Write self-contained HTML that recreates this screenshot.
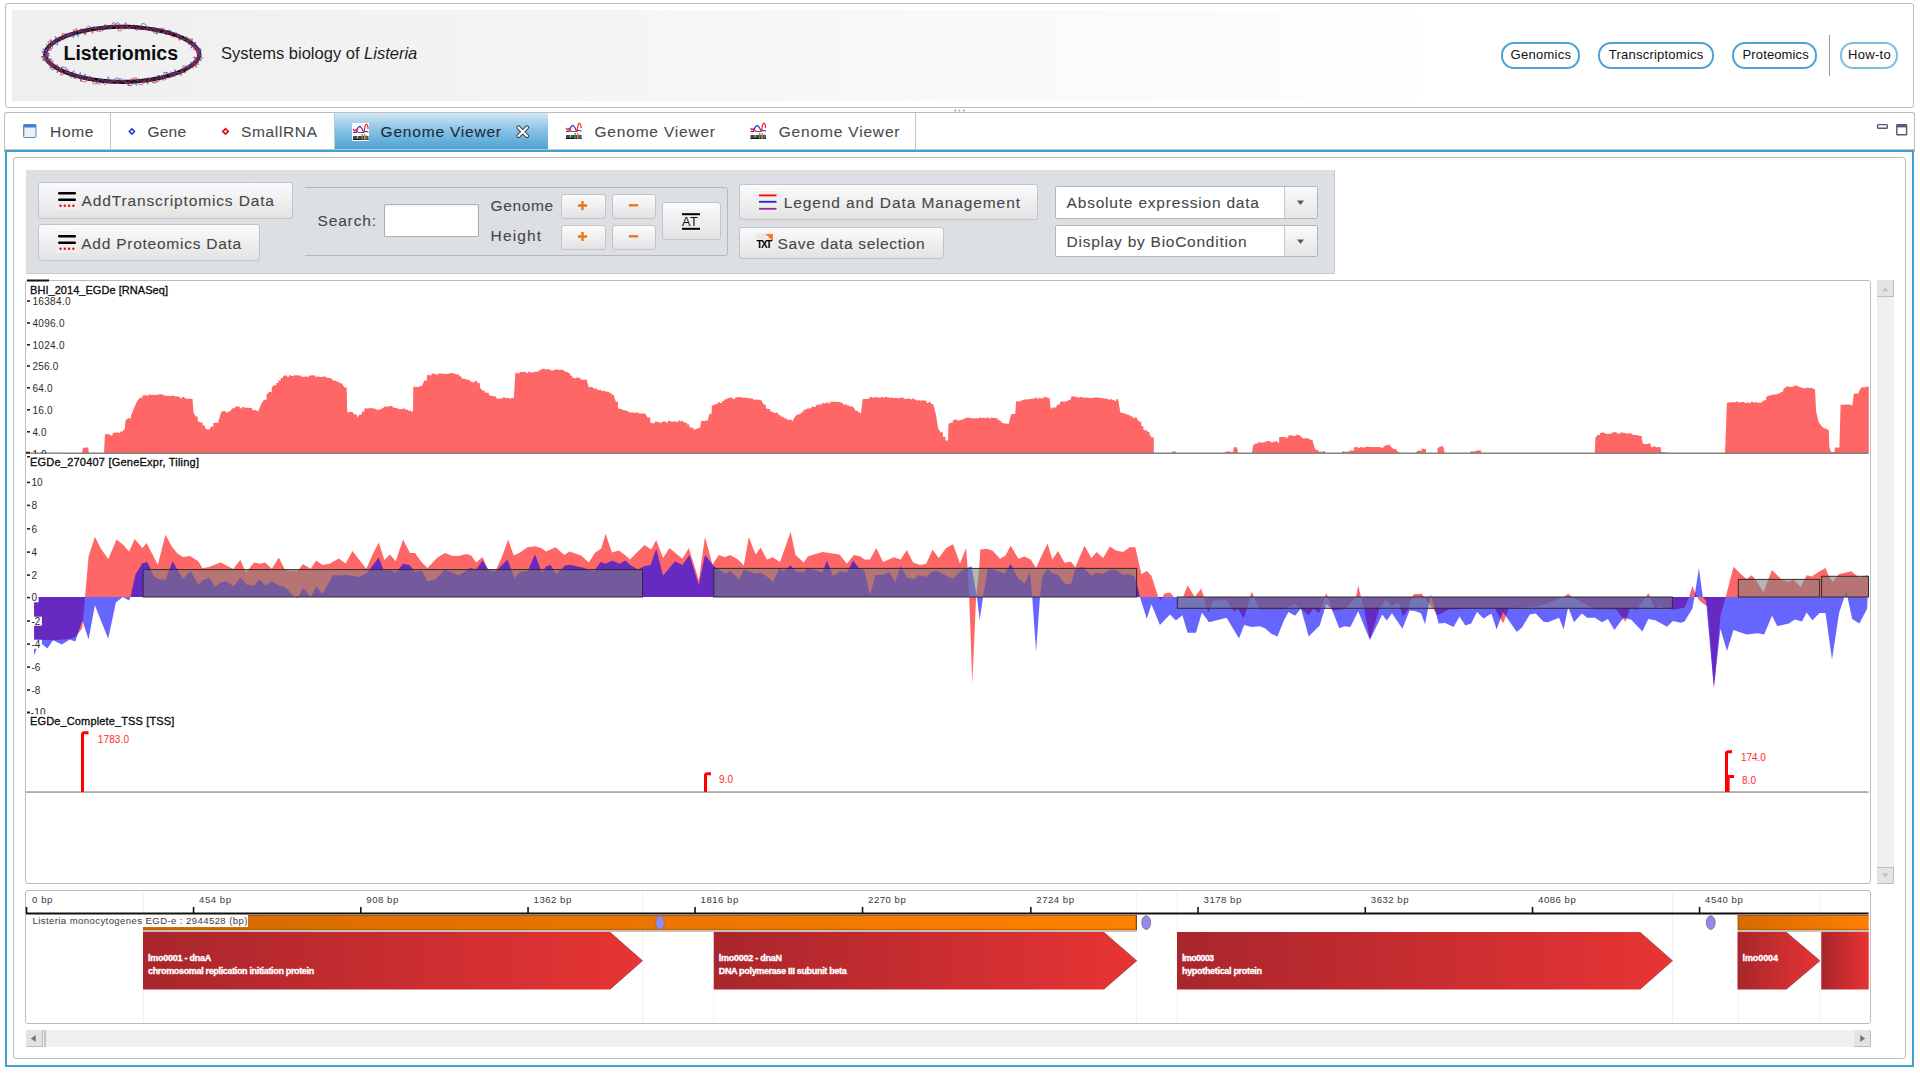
<!DOCTYPE html><html><head><meta charset="utf-8"><title>Listeriomics - Genome Viewer</title><style>
*{box-sizing:border-box;margin:0;padding:0}
html,body{width:1920px;height:1073px;overflow:hidden;background:#fff;font-family:"Liberation Sans",sans-serif}
.a{position:absolute}
.t{position:absolute;white-space:nowrap;line-height:normal}
.dv{-webkit-text-stroke:0.1px currentColor}
.btn{position:absolute;border:1px solid #c2c4c8;border-radius:3px;background:linear-gradient(#fbfbfb,#e3e3e3)}
.hb{position:absolute;border:2px solid #4ba3d5;border-radius:13px;background:#fff}
svg text{font-family:"Liberation Sans",sans-serif}
</style></head><body>
<div class="a" style="left:5px;top:3px;width:1909px;height:105px;border:1px solid #bdbdbd;border-radius:3px"></div>
<div class="a" style="left:12px;top:10px;width:1895px;height:91px;background:linear-gradient(to right,#efefef 0px,#f3f3f3 450px,#f8f8f8 850px,#fafafa 1040px,#fcfcfc 1250px,#fefefe 1340px,#ffffff 1430px)"></div>
<svg class="a" style="left:0;top:0" width="260" height="110"><polygon points="199.20,54.30 199.17,54.90 199.09,55.54 198.95,56.19 198.76,56.86 198.51,57.54 198.20,58.22 197.84,58.90 197.43,59.58 196.96,60.27 196.44,60.95 195.87,61.64 195.24,62.32 194.56,63.00 193.83,63.67 193.04,64.34 192.21,65.01 191.33,65.67 190.39,66.32 189.41,66.97 188.38,67.61 187.30,68.24 186.18,68.86 185.01,69.47 183.80,70.08 182.55,70.67 181.25,71.25 179.91,71.82 178.54,72.38 177.12,72.93 175.66,73.46 174.17,73.98 172.64,74.49 171.08,74.99 169.49,75.47 167.87,75.93 166.21,76.38 164.53,76.82 162.82,77.23 161.08,77.64 159.32,78.02 157.54,78.39 155.73,78.74 153.91,79.08 152.07,79.39 150.21,79.69 148.34,79.97 146.46,80.24 144.57,80.48 142.67,80.70 140.76,80.91 138.85,81.10 136.94,81.27 135.03,81.41 133.12,81.54 131.23,81.65 129.35,81.74 127.48,81.81 125.65,81.86 123.86,81.89 122.20,81.90 120.54,81.89 118.75,81.86 116.92,81.81 115.05,81.74 113.17,81.65 111.28,81.54 109.37,81.41 107.46,81.27 105.55,81.10 103.64,80.91 101.73,80.70 99.83,80.48 97.94,80.24 96.06,79.97 94.19,79.69 92.33,79.39 90.49,79.08 88.67,78.74 86.86,78.39 85.08,78.02 83.32,77.64 81.58,77.23 79.87,76.82 78.19,76.38 76.53,75.93 74.91,75.47 73.32,74.99 71.76,74.49 70.23,73.98 68.74,73.46 67.28,72.93 65.86,72.38 64.49,71.82 63.15,71.25 61.85,70.67 60.60,70.08 59.39,69.47 58.22,68.86 57.10,68.24 56.02,67.61 54.99,66.97 54.01,66.32 53.07,65.67 52.19,65.01 51.36,64.34 50.57,63.67 49.84,63.00 49.16,62.32 48.53,61.64 47.96,60.95 47.44,60.27 46.97,59.58 46.56,58.90 46.20,58.22 45.89,57.54 45.64,56.86 45.45,56.19 45.31,55.54 45.23,54.90 45.20,54.30 45.23,53.70 45.31,53.06 45.45,52.41 45.64,51.74 45.89,51.06 46.20,50.38 46.56,49.70 46.97,49.02 47.44,48.33 47.96,47.65 48.53,46.96 49.16,46.28 49.84,45.60 50.57,44.93 51.36,44.26 52.19,43.59 53.07,42.93 54.01,42.28 54.99,41.63 56.02,40.99 57.10,40.36 58.22,39.74 59.39,39.13 60.60,38.52 61.85,37.93 63.15,37.35 64.49,36.78 65.86,36.22 67.28,35.67 68.74,35.14 70.23,34.62 71.76,34.11 73.32,33.61 74.91,33.13 76.53,32.67 78.19,32.22 79.87,31.78 81.58,31.37 83.32,30.96 85.08,30.58 86.86,30.21 88.67,29.86 90.49,29.52 92.33,29.21 94.19,28.91 96.06,28.63 97.94,28.36 99.83,28.12 101.73,27.90 103.64,27.69 105.55,27.50 107.46,27.33 109.37,27.19 111.28,27.06 113.17,26.95 115.05,26.86 116.92,26.79 118.75,26.74 120.54,26.71 122.20,26.70 123.86,26.71 125.65,26.74 127.48,26.79 129.35,26.86 131.23,26.95 133.12,27.06 135.03,27.19 136.94,27.33 138.85,27.50 140.76,27.69 142.67,27.90 144.57,28.12 146.46,28.36 148.34,28.63 150.21,28.91 152.07,29.21 153.91,29.52 155.73,29.86 157.54,30.21 159.32,30.58 161.08,30.96 162.82,31.37 164.53,31.78 166.21,32.22 167.87,32.67 169.49,33.13 171.08,33.61 172.64,34.11 174.17,34.62 175.66,35.14 177.12,35.67 178.54,36.22 179.91,36.78 181.25,37.35 182.55,37.93 183.80,38.52 185.01,39.13 186.18,39.74 187.30,40.36 188.38,40.99 189.41,41.63 190.39,42.28 191.33,42.93 192.21,43.59 193.04,44.26 193.83,44.93 194.56,45.60 195.24,46.28 195.87,46.96 196.44,47.65 196.96,48.33 197.43,49.02 197.84,49.70 198.20,50.38 198.51,51.06 198.76,51.74 198.95,52.41 199.09,53.06 199.17,53.70 199.20,54.30" fill="none" stroke="#0a0a0a" stroke-width="4"/><polyline points="196.8,54.3 199.5,55.2 197.8,55.8 199.6,57.3 199.3,58.4 194.4,57.0 193.6,57.4 198.9,62.8 194.1,60.4 193.1,61.1 196.7,67.1 192.4,64.5 193.2,68.1 189.9,66.4 189.3,68.5 185.6,65.6 186.1,70.3 185.2,73.1 182.1,71.1 181.0,73.7 178.8,73.9 174.8,69.6 174.8,76.2 172.2,75.5 169.2,73.7 166.3,72.0 165.8,79.9 162.6,77.0 160.6,79.8 158.3,81.7 155.4,80.8 153.1,83.1 149.7,78.8 147.6,82.8 144.5,80.0 142.3,84.7 139.5,84.5 136.2,77.7 133.6,78.2 131.0,79.1 128.6,86.0 125.9,81.3 123.4,83.0 121.1,80.1 118.5,81.9 116.0,80.7 113.4,80.3 110.6,82.3 107.8,82.1 104.9,84.7 102.3,82.4 99.4,84.3 96.7,83.3 93.8,84.1 91.6,80.8 89.9,75.9 86.1,81.6 83.4,81.9 80.9,80.8 79.2,77.3 76.5,77.9 75.5,72.9 71.6,77.6 70.1,74.6 68.9,71.5 67.6,68.9 63.0,74.7 60.6,74.9 62.2,66.7 57.6,71.6 57.7,67.6 57.4,64.8 55.4,65.0 51.6,67.6 49.7,67.3 53.4,60.7 48.9,63.5 51.8,59.1 46.4,62.1 48.4,59.1 43.6,60.6 42.2,59.8 45.7,57.0 41.1,57.1 47.0,55.0 49.0,54.3 44.4,53.3 49.5,53.5 48.3,52.5 46.8,51.0 45.7,49.2 49.7,50.4 51.1,50.3 46.3,44.5 50.8,47.0 47.9,41.7 49.6,41.1 53.7,43.9 54.5,42.3 55.7,41.0 56.7,39.1 58.5,38.6 60.4,38.0 61.9,36.7 62.7,33.2 66.2,36.0 68.4,35.9 69.7,32.7 73.2,36.1 75.2,34.9 75.9,28.4 79.3,31.7 81.7,30.9 85.2,35.1 86.9,31.0 89.2,29.0 92.6,33.5 94.4,27.8 97.0,27.3 100.3,32.0 102.4,26.7 105.2,27.8 107.8,25.7 110.7,28.4 113.2,25.1 115.9,24.7 118.6,31.0 121.1,30.7 123.4,25.1 126.0,22.6 128.4,29.1 131.1,27.3 133.9,26.3 136.4,28.9 139.1,28.8 141.7,29.5 144.4,29.3 147.4,27.6 149.6,30.6 152.3,30.4 155.5,27.3 156.8,34.4 160.3,30.1 163.1,29.3 164.6,33.6 166.7,34.9 170.5,30.6 171.2,36.1 173.2,37.2 176.0,35.9 178.9,34.4 178.8,40.2 181.4,39.2 183.1,39.9 186.9,36.7 186.8,40.7 190.3,38.4 188.4,44.5 190.5,44.2 193.5,42.8 196.0,42.3 194.5,46.1 193.9,48.4 193.8,49.8 197.4,48.5 195.4,51.0 200.8,49.5 201.6,50.6 196.2,53.2 197.2,53.7 202.0,54.3" fill="none" stroke="#e81e1e" stroke-width="0.9" stroke-opacity="0.75"/><polyline points="200.3,54.3 201.3,55.4 201.6,56.7 202.5,58.3 200.3,58.9 201.1,60.8 193.7,57.5 196.3,60.7 198.6,64.5 195.7,63.8 196.1,66.5 190.4,62.0 191.2,65.4 188.8,64.6 188.8,67.8 187.4,68.9 183.5,65.3 182.7,67.8 181.2,69.1 181.6,75.2 179.1,74.7 175.1,70.4 174.9,76.5 170.9,71.6 170.0,76.4 166.5,72.8 163.9,72.3 163.4,80.5 159.6,75.3 157.1,75.9 155.9,83.1 153.1,82.6 149.6,77.9 147.8,84.2 144.6,80.8 142.1,82.4 138.9,78.4 136.8,85.3 133.9,83.2 131.3,85.9 128.6,85.3 125.8,80.0 123.3,80.6 121.1,78.9 118.6,78.7 116.1,77.9 113.4,79.9 110.5,82.4 108.3,76.8 105.1,82.7 102.7,79.3 100.0,78.8 96.8,83.0 94.5,79.6 92.2,77.7 89.3,78.7 86.4,80.2 85.1,73.9 80.8,81.4 80.4,72.5 76.4,78.2 73.8,78.4 73.8,70.6 69.5,76.5 68.6,72.1 65.9,73.2 66.0,67.6 64.1,67.2 61.9,67.5 57.0,72.9 58.6,66.0 54.6,69.4 52.2,69.8 50.7,68.8 52.7,63.6 51.5,62.8 49.5,63.0 46.9,63.5 50.7,58.7 45.3,61.2 44.3,60.3 43.1,59.3 49.6,55.7 41.5,57.0 48.9,54.7 46.6,54.3 44.3,53.3 41.8,51.7 47.1,52.1 42.6,49.0 46.2,49.5 48.6,49.6 49.2,48.8 50.9,48.7 52.3,48.5 52.7,47.2 50.7,42.6 50.4,39.4 56.0,44.6 57.9,44.6 55.1,36.4 58.8,39.1 61.0,39.3 63.4,39.8 63.9,36.1 65.1,33.4 68.4,35.7 70.5,35.3 73.7,37.7 73.7,29.6 78.1,36.6 79.4,32.0 81.1,28.4 85.0,34.0 86.3,28.2 88.6,25.8 91.7,28.1 94.1,26.3 97.6,32.0 99.9,28.7 102.9,30.9 104.9,24.4 108.1,29.1 110.6,27.5 113.0,22.5 115.8,23.7 118.4,22.5 121.1,27.1 123.4,26.8 125.9,24.7 128.5,27.0 131.0,28.8 133.7,28.0 136.2,30.5 139.1,28.6 142.4,23.4 145.1,24.0 147.4,27.3 149.9,28.9 152.3,30.7 154.4,33.4 157.2,32.2 160.7,28.3 163.4,28.1 164.7,33.1 168.1,30.1 170.4,30.8 172.4,32.2 174.6,33.2 177.0,33.1 177.8,37.2 180.9,35.2 181.2,39.5 183.7,38.6 186.6,37.2 188.0,38.8 187.7,42.7 192.3,38.7 192.2,41.9 193.1,43.3 190.8,48.1 195.1,45.5 194.0,48.3 197.7,46.8 196.9,48.9 200.3,48.3 199.5,50.1 201.2,50.7 197.6,52.8 200.4,53.3 201.3,54.3" fill="none" stroke="#3550c0" stroke-width="0.9" stroke-opacity="0.75"/><polyline points="199.0,54.3 199.4,54.9 200.9,55.7 198.8,56.0 198.9,56.7 199.0,57.4 197.1,57.3 198.1,58.6 198.2,59.5 198.4,60.5 195.4,59.4 195.7,60.5 194.5,60.5 196.2,63.3 195.2,63.6 192.6,62.1 194.6,65.8 193.7,66.4 192.1,66.0 191.1,66.4 189.1,65.4 187.9,65.4 188.1,67.9 186.1,66.7 185.4,67.8 184.4,68.5 182.9,68.2 182.6,70.5 181.3,70.9 180.8,73.1 179.0,72.3 177.9,73.3 176.3,73.2 175.2,74.4 173.5,74.0 171.9,73.7 171.4,77.2 169.9,77.6 168.1,77.4 166.4,77.3 164.5,76.0 162.8,76.0 161.3,76.6 159.5,76.1 158.5,79.4 156.5,78.2 155.2,80.4 153.1,78.7 151.8,81.5 150.0,81.3 147.7,77.8 146.1,79.0 144.8,82.3 142.8,80.6 141.3,83.0 139.2,80.6 137.4,79.3 135.8,81.9 134.1,82.7 132.2,80.6 130.4,79.9 128.7,81.0 127.1,83.9 125.4,83.0 123.7,80.2 122.2,80.8 120.7,80.1 119.1,79.9 117.3,83.1 115.7,80.3 113.9,81.9 112.2,81.4 110.5,80.1 108.6,82.4 107.0,79.6 105.0,81.7 103.5,79.2 101.6,80.3 100.0,79.2 98.2,79.3 96.1,82.1 94.4,81.1 93.0,78.6 90.9,80.9 89.7,77.6 87.9,78.1 85.9,79.8 84.4,78.5 83.3,75.8 80.8,79.3 80.1,75.6 78.5,75.4 76.3,77.1 75.4,74.8 73.9,74.2 72.8,72.9 71.4,72.5 69.3,74.0 68.5,72.2 66.6,73.1 65.6,71.7 64.3,71.5 62.1,73.0 61.8,70.6 60.5,70.4 58.7,71.0 59.1,67.7 58.1,67.1 55.4,69.3 54.6,68.4 55.1,65.7 54.4,64.9 52.1,66.3 50.7,66.3 52.0,63.2 49.1,65.0 48.6,64.2 48.8,62.6 48.8,61.5 49.4,60.0 49.2,59.2 45.4,60.9 47.7,58.6 45.6,58.9 47.0,57.5 44.5,57.8 45.2,56.8 46.3,55.8 46.7,55.2 44.3,54.9 47.1,54.3 46.4,53.9 45.0,53.1 43.9,52.2 45.1,51.8 46.7,51.7 44.4,49.9 47.5,50.7 48.5,50.5 48.0,49.4 47.7,48.3 49.5,48.8 49.6,47.9 49.6,46.7 49.6,45.4 51.5,46.2 51.6,44.9 50.9,42.4 51.5,41.5 53.2,42.0 54.0,41.3 55.2,41.1 57.2,42.2 58.4,42.0 59.4,41.5 58.7,37.5 60.2,37.7 60.9,36.1 63.8,39.4 63.9,36.4 65.5,36.5 66.4,34.9 68.3,36.1 68.7,32.8 71.4,36.2 72.2,33.8 73.4,32.5 74.7,31.4 76.4,31.6 78.0,31.4 79.4,30.6 80.9,29.7 83.1,31.7 84.4,29.9 85.8,28.6 87.5,28.4 89.6,30.1 91.0,28.1 92.6,27.5 94.6,28.5 96.3,28.0 98.2,28.9 99.8,27.8 101.5,27.4 103.5,29.6 105.1,26.9 106.7,25.2 108.5,25.6 110.3,26.1 112.2,27.5 113.8,25.9 115.6,26.5 117.4,27.0 119.0,25.2 120.7,28.5 122.2,25.6 123.7,28.8 125.4,26.3 127.1,26.9 128.7,28.0 130.5,26.0 132.2,27.0 134.0,26.6 135.9,25.4 137.4,28.5 139.1,29.7 141.0,28.6 142.9,27.1 144.4,29.4 146.1,29.8 148.3,26.8 149.9,28.1 151.5,29.4 153.5,27.7 154.8,30.4 156.7,29.3 158.0,31.6 159.8,31.0 161.8,29.7 163.5,29.7 165.1,30.2 166.1,32.7 167.8,32.3 169.0,33.8 170.3,35.0 172.2,34.0 174.1,33.0 175.5,33.4 176.7,34.5 178.4,34.0 178.6,37.3 179.7,38.3 181.4,37.6 182.2,38.9 183.3,39.7 184.8,39.4 186.3,39.2 187.0,40.2 187.6,41.5 189.8,40.1 191.1,40.2 190.7,42.8 190.6,44.7 191.2,45.4 194.3,43.2 192.6,46.5 195.2,45.0 195.5,46.1 195.2,47.5 197.4,46.7 195.1,49.4 196.0,49.7 197.5,49.5 196.2,51.0 199.7,50.1 197.5,51.7 197.3,52.4 197.0,53.0 199.7,53.1 198.9,53.8 199.8,54.3" fill="none" stroke="#e81e1e" stroke-width="0.8" stroke-opacity="0.7"/><polyline points="198.1,54.3 200.0,54.9 199.9,55.6 200.5,56.4 197.5,56.2 197.5,56.9 196.9,57.3 197.0,58.0 198.6,59.7 195.9,58.9 197.0,60.5 195.4,60.3 195.1,61.1 195.0,62.1 195.6,64.0 194.3,63.9 191.9,62.5 191.9,64.0 190.7,64.2 191.8,67.4 190.7,67.8 189.7,68.4 188.8,69.0 187.6,69.3 186.9,70.7 185.5,70.7 183.3,69.1 183.3,72.0 181.4,71.1 180.7,72.7 179.1,72.5 177.6,72.4 176.1,72.7 174.9,73.4 173.3,73.4 171.7,73.0 171.1,76.4 169.6,76.8 168.3,78.0 166.4,77.2 164.7,77.0 163.3,78.2 161.1,76.0 160.0,78.7 158.2,78.0 156.3,77.2 154.7,77.6 153.2,79.3 151.3,78.4 149.8,79.6 148.1,80.5 146.3,79.8 144.4,78.9 142.8,80.6 140.9,79.7 139.2,79.9 137.4,79.9 135.7,80.8 133.9,79.6 132.3,82.3 130.6,83.7 128.8,81.3 127.1,82.8 125.4,83.8 123.7,79.9 122.2,80.3 120.7,83.2 119.0,83.4 117.3,82.4 115.7,80.3 113.9,81.3 112.1,83.2 110.3,83.2 108.5,82.7 107.0,79.9 105.0,82.6 103.4,80.3 101.5,81.6 100.0,78.9 97.8,82.3 96.3,80.5 94.5,80.7 93.1,78.2 91.1,79.7 89.4,79.2 87.8,79.0 86.3,77.6 84.3,78.9 83.1,76.9 81.5,76.3 80.1,75.4 78.0,77.2 77.1,74.3 75.5,74.4 74.2,73.3 72.0,75.2 70.7,74.4 69.4,73.9 68.8,71.3 66.8,72.5 65.7,71.6 64.9,70.0 63.8,69.2 60.8,72.6 61.3,68.6 59.9,68.7 58.9,68.1 57.1,68.8 57.3,66.2 55.5,67.1 54.8,66.1 52.7,67.2 54.0,63.7 52.4,64.2 51.2,64.2 49.1,65.1 49.7,63.0 49.2,62.2 48.0,62.2 48.7,60.5 49.2,59.2 47.1,59.8 45.2,60.1 45.4,59.0 47.0,57.5 45.0,57.6 44.1,57.1 46.4,55.8 44.9,55.5 45.9,54.8 46.3,54.3 46.2,53.8 46.6,53.4 46.1,52.7 47.5,52.5 46.2,51.5 47.7,51.4 45.4,49.5 46.3,49.2 48.9,50.0 46.6,47.5 49.1,48.4 48.6,47.0 49.0,46.1 50.3,46.2 51.1,45.7 51.4,44.6 52.9,45.1 51.8,41.9 54.5,44.0 53.7,40.8 56.0,42.4 56.8,41.5 57.6,40.6 59.4,41.5 60.2,40.5 60.9,39.1 61.9,38.2 62.3,35.9 63.3,34.9 66.2,38.3 66.7,35.7 68.6,36.9 69.0,33.6 71.1,35.2 71.7,32.3 73.6,33.3 75.6,34.6 77.2,34.7 78.5,33.3 79.3,30.2 81.7,32.9 82.9,31.1 84.7,31.2 86.3,31.0 87.6,28.7 89.7,30.9 91.0,28.5 92.8,28.4 94.3,26.9 96.3,28.5 97.8,26.5 99.9,28.4 101.5,27.6 103.3,27.2 105.0,26.1 106.7,25.6 108.8,28.9 110.5,28.7 112.1,26.9 113.8,25.5 115.6,26.7 117.4,27.7 119.0,24.7 120.7,27.6 122.2,28.5 123.7,28.7 125.3,28.8 127.1,25.8 128.7,28.6 130.5,26.0 132.3,25.4 134.2,24.9 135.9,25.9 137.5,27.7 139.3,27.0 141.2,26.3 142.9,27.0 144.5,29.0 146.5,27.2 147.8,30.3 149.7,29.7 151.9,27.0 153.2,29.5 154.7,30.7 156.8,28.8 158.2,30.6 159.4,32.8 161.0,33.1 162.8,32.5 164.5,32.5 166.7,30.4 167.4,33.7 169.7,31.6 171.2,32.0 172.1,34.3 174.3,32.4 175.4,33.8 176.3,35.4 177.3,36.9 178.9,36.5 180.9,35.3 181.5,37.3 182.1,39.2 183.6,39.0 184.9,39.2 185.4,40.8 187.2,39.9 187.0,42.6 189.8,40.2 189.2,43.2 189.8,44.0 191.9,42.9 191.9,44.5 194.3,43.1 193.9,45.0 194.7,45.6 196.3,45.3 194.9,47.7 197.2,46.9 197.4,47.8 197.0,49.0 199.4,48.4 196.2,51.0 199.8,50.0 197.1,51.9 200.3,51.5 197.5,52.9 197.2,53.5 199.2,53.8 201.1,54.3" fill="none" stroke="#3550c0" stroke-width="0.8" stroke-opacity="0.7"/></svg>
<div class="t" style="left:63.50px;top:41.65px;font-size:19.5px;letter-spacing:-0.034px;font-weight:bold;font-style:normal;color:#0d0d0d;">Listeriomics</div>
<div class="t" style="left:221.00px;top:44.32px;font-size:16.5px;letter-spacing:0.000px;font-weight:normal;font-style:normal;color:#1e1e1e;">Systems biology of <i>Listeria</i></div>
<div class="hb" style="left:1501px;top:42px;width:79px;height:27px"></div>
<div class="t" style="left:1510.60px;top:46.84px;font-size:13px;letter-spacing:0.270px;font-weight:normal;font-style:normal;color:#111;">Genomics</div>
<div class="hb" style="left:1598px;top:42px;width:116px;height:27px"></div>
<div class="t" style="left:1608.75px;top:46.84px;font-size:13px;letter-spacing:0.231px;font-weight:normal;font-style:normal;color:#111;">Transcriptomics</div>
<div class="hb" style="left:1732px;top:42px;width:85px;height:27px"></div>
<div class="t" style="left:1742.50px;top:46.84px;font-size:13px;letter-spacing:0.136px;font-weight:normal;font-style:normal;color:#111;">Proteomics</div>
<div class="hb" style="left:1840px;top:42px;width:58px;height:27px;border-color:#7fbde3"></div>
<div class="t" style="left:1848.00px;top:46.84px;font-size:13px;letter-spacing:0.313px;font-weight:normal;font-style:normal;color:#111;">How-to</div>
<div class="a" style="left:1829px;top:35px;width:1px;height:41px;background:#9a9a9a"></div>
<svg class="a" style="left:950px;top:106px" width="20" height="8"><circle cx="5.2" cy="4.4" r="1" fill="#999"/><circle cx="9.4" cy="4.4" r="1" fill="#aaa"/><circle cx="13.9" cy="4.4" r="1" fill="#999"/></svg>
<div class="a" style="left:4px;top:112px;width:1911px;height:40px;border:1px solid #bdbdbd;border-bottom:none;border-radius:3px 3px 0 0"></div>
<div class="a" style="left:110px;top:113px;width:1px;height:37px;background:#c4c4c4"></div>
<div class="a" style="left:915px;top:113px;width:1px;height:37px;background:#c4c4c4"></div>
<div class="a" style="left:5px;top:149px;width:1909px;height:1px;background:#c6c6c6"></div>
<div class="a" style="left:334px;top:113px;width:214px;height:36px;background:linear-gradient(#d2e8f5,#8cc4e6 45%,#4ca3d3);border-left:1px solid #b9c9d3"></div>
<div class="t dv" style="left:50.00px;top:122.97px;font-size:15.5px;letter-spacing:0.715px;font-weight:normal;font-style:normal;color:#4a4a4a;">Home</div>
<div class="t dv" style="left:147.50px;top:122.97px;font-size:15.5px;letter-spacing:0.196px;font-weight:normal;font-style:normal;color:#4a4a4a;">Gene</div>
<div class="t dv" style="left:241.00px;top:122.97px;font-size:15.5px;letter-spacing:0.645px;font-weight:normal;font-style:normal;color:#4a4a4a;">SmallRNA</div>
<div class="t dv" style="left:380.60px;top:122.97px;font-size:15.5px;letter-spacing:0.795px;font-weight:normal;font-style:normal;color:#1b2a35;">Genome Viewer</div>
<div class="t dv" style="left:594.50px;top:122.97px;font-size:15.5px;letter-spacing:0.804px;font-weight:normal;font-style:normal;color:#4a4a4a;">Genome Viewer</div>
<div class="t dv" style="left:778.70px;top:122.97px;font-size:15.5px;letter-spacing:0.829px;font-weight:normal;font-style:normal;color:#4a4a4a;">Genome Viewer</div>
<svg class="a" style="left:0;top:110px" width="960" height="40"><rect x="23.5" y="14.5" width="12.5" height="13" rx="1" fill="#e6f1fb" stroke="#6a86b4" stroke-width="1"/><rect x="23.5" y="14.5" width="12.5" height="3" fill="#3d7fd6"/><rect x="23.8" y="17.5" width="1" height="10" fill="#c9a84a" opacity="0.6"/><path d="M131.9,18.9 L134.5,21.5 L131.9,24.1 L129.3,21.5 Z" fill="#fff" stroke="#2a32c8" stroke-width="1.5"/><path d="M225.5,18.7 L228.2,21.4 L225.5,24.1 L222.8,21.4 Z" fill="#fff" stroke="#e01010" stroke-width="1.7"/><rect x="352.0" y="13.0" width="17" height="18" fill="#fff"/><g transform="translate(353.0,14.0)"><rect x="0" y="12" width="15.5" height="3.8" fill="#4a4a4a"/><rect x="0" y="15" width="15.5" height="1" fill="#111"/><rect x="4" y="12" width="1" height="2.5" fill="#bbb"/><rect x="8.5" y="10" width="1.3" height="6" fill="#22aa44"/><rect x="11" y="10" width="1.5" height="6" fill="#ee7744"/><rect x="13.3" y="11.5" width="1" height="4.5" fill="#557799"/><path d="M0,8.5 H3 Q6.5,-2.5 10,7 L15.5,8" fill="none" stroke="#2233dd" stroke-width="1.2"/><path d="M0,5 L1.5,6.8 L3,5.5 L5.2,8.5 H11 Q12,-0.5 13.5,0.3 Q15.2,1 15,5" fill="none" stroke="#ee2222" stroke-width="1.2"/></g><g transform="translate(566.0,13.0)"><rect x="0" y="12" width="15.5" height="3.8" fill="#4a4a4a"/><rect x="0" y="15" width="15.5" height="1" fill="#111"/><rect x="4" y="12" width="1" height="2.5" fill="#bbb"/><rect x="8.5" y="10" width="1.3" height="6" fill="#22aa44"/><rect x="11" y="10" width="1.5" height="6" fill="#ee7744"/><rect x="13.3" y="11.5" width="1" height="4.5" fill="#557799"/><path d="M0,8.5 H3 Q6.5,-2.5 10,7 L15.5,8" fill="none" stroke="#2233dd" stroke-width="1.2"/><path d="M0,5 L1.5,6.8 L3,5.5 L5.2,8.5 H11 Q12,-0.5 13.5,0.3 Q15.2,1 15,5" fill="none" stroke="#ee2222" stroke-width="1.2"/></g><g transform="translate(750.5,13.0)"><rect x="0" y="12" width="15.5" height="3.8" fill="#4a4a4a"/><rect x="0" y="15" width="15.5" height="1" fill="#111"/><rect x="4" y="12" width="1" height="2.5" fill="#bbb"/><rect x="8.5" y="10" width="1.3" height="6" fill="#22aa44"/><rect x="11" y="10" width="1.5" height="6" fill="#ee7744"/><rect x="13.3" y="11.5" width="1" height="4.5" fill="#557799"/><path d="M0,8.5 H3 Q6.5,-2.5 10,7 L15.5,8" fill="none" stroke="#2233dd" stroke-width="1.2"/><path d="M0,5 L1.5,6.8 L3,5.5 L5.2,8.5 H11 Q12,-0.5 13.5,0.3 Q15.2,1 15,5" fill="none" stroke="#ee2222" stroke-width="1.2"/></g><path d="M518.5,17.5 L527,26 M527,17.5 L518.5,26" stroke="#33414d" stroke-width="4.2" stroke-linecap="round"/><path d="M518.5,17.5 L527,26 M527,17.5 L518.5,26" stroke="#fff" stroke-width="2.2" stroke-linecap="round"/></svg>
<svg class="a" style="left:1870px;top:118px" width="45" height="22"><rect x="7.6" y="6.6" width="9.7" height="3.6" rx="0.8" fill="#fff" stroke="#4d5a7a" stroke-width="1.4"/><rect x="26.8" y="6.8" width="9.8" height="10" rx="0.6" fill="#fff" stroke="#4d5a7a" stroke-width="1.4"/><rect x="26.8" y="6.8" width="9.8" height="2.6" fill="#4d5a7a"/></svg>
<div class="a" style="left:5px;top:150px;width:1909px;height:917px;border:2px solid #43a0d4"></div>
<div class="a" style="left:13px;top:157px;width:1893px;height:902px;border:1px solid #bcbcbc;border-radius:3px"></div>
<div class="a" style="left:26px;top:170px;width:1309px;height:104px;background:#dcdfe4;border-right:1px solid #c6c8cc;border-bottom:1px solid #c6c8cc;border-radius:0 0 2px 0"></div>
<div class="btn" style="left:38px;top:182px;width:255px;height:37px"></div>
<div class="btn" style="left:38px;top:224px;width:222px;height:37px"></div>
<div class="t dv" style="left:81.50px;top:191.67px;font-size:15.5px;letter-spacing:0.866px;font-weight:normal;font-style:normal;color:#474747;">AddTranscriptomics Data</div>
<div class="t dv" style="left:81.25px;top:234.72px;font-size:15.5px;letter-spacing:0.751px;font-weight:normal;font-style:normal;color:#474747;">Add Proteomics Data</div>
<div class="btn" style="left:384px;top:204px;width:95px;height:33px;background:#fff;border-color:#aeb0b3;border-radius:1px;box-shadow:inset 0 1px 2px rgba(0,0,0,0.08)"></div>
<div class="t dv" style="left:317.50px;top:211.97px;font-size:15.5px;letter-spacing:0.848px;font-weight:normal;font-style:normal;color:#474747;">Search:</div>
<div class="t dv" style="left:490.60px;top:196.87px;font-size:15.5px;letter-spacing:0.591px;font-weight:normal;font-style:normal;color:#474747;">Genome</div>
<div class="t dv" style="left:490.60px;top:226.97px;font-size:15.5px;letter-spacing:1.118px;font-weight:normal;font-style:normal;color:#474747;">Height</div>
<div class="btn" style="left:561px;top:194px;width:45px;height:25px"></div>
<div class="btn" style="left:612px;top:194px;width:44px;height:25px"></div>
<div class="btn" style="left:561px;top:225px;width:45px;height:25px"></div>
<div class="btn" style="left:612px;top:225px;width:44px;height:25px"></div>
<div class="btn" style="left:662px;top:202px;width:59px;height:38px"></div>
<div class="btn" style="left:739px;top:184px;width:299px;height:36px"></div>
<div class="btn" style="left:739px;top:227px;width:205px;height:32px"></div>
<div class="t dv" style="left:783.70px;top:193.97px;font-size:15.5px;letter-spacing:0.903px;font-weight:normal;font-style:normal;color:#474747;">Legend and Data Management</div>
<div class="t dv" style="left:777.50px;top:234.77px;font-size:15.5px;letter-spacing:0.662px;font-weight:normal;font-style:normal;color:#474747;">Save data selection</div>
<div class="a" style="left:1055px;top:186px;width:263px;height:33px;border:1px solid #b3b5b8;border-radius:2px;background:#fff"></div>
<div class="a" style="left:1284px;top:187px;width:33px;height:31px;border-left:1px solid #c9c9c9;background:linear-gradient(#fafafa,#e6e6e6)"></div>
<div class="t dv" style="left:1066.60px;top:193.97px;font-size:15.5px;letter-spacing:0.797px;font-weight:normal;font-style:normal;color:#474747;">Absolute expression data</div>
<div class="a" style="left:1055px;top:225px;width:263px;height:32px;border:1px solid #b3b5b8;border-radius:2px;background:#fff"></div>
<div class="a" style="left:1284px;top:226px;width:33px;height:30px;border-left:1px solid #c9c9c9;background:linear-gradient(#fafafa,#e6e6e6)"></div>
<div class="t dv" style="left:1066.60px;top:232.97px;font-size:15.5px;letter-spacing:0.741px;font-weight:normal;font-style:normal;color:#474747;">Display by BioCondition</div>
<svg class="a" style="left:0;top:0" width="1340" height="280"><rect x="55" y="188" width="23" height="22" fill="#f1f1f1" opacity="0.7"/><rect x="58" y="192" width="18" height="2.4" rx="1.2" fill="#000"/><rect x="58" y="198.6" width="18" height="2.4" rx="1.2" fill="#000"/><circle cx="60.5" cy="205.7" r="1.2" fill="#f00"/><circle cx="64.8" cy="205.7" r="1.2" fill="#f00"/><circle cx="69.1" cy="205.7" r="1.2" fill="#f00"/><circle cx="73.4" cy="205.7" r="1.2" fill="#f00"/><rect x="55" y="231" width="23" height="22" fill="#f1f1f1" opacity="0.7"/><rect x="58" y="235" width="18" height="2.4" rx="1.2" fill="#000"/><rect x="58" y="241.6" width="18" height="2.4" rx="1.2" fill="#000"/><circle cx="60.5" cy="248.7" r="1.2" fill="#f00"/><circle cx="64.8" cy="248.7" r="1.2" fill="#f00"/><circle cx="69.1" cy="248.7" r="1.2" fill="#f00"/><circle cx="73.4" cy="248.7" r="1.2" fill="#f00"/><path d="M305,187.5 H725.5 q2,0 2,2 V253.5 q0,2 -2,2 H305" fill="none" stroke="#b5b8bd" stroke-width="1"/><rect x="756" y="191" width="22" height="21" fill="#eeeeee" opacity="0.6"/><rect x="759" y="194.5" width="17.5" height="1.8" fill="#f00"/><rect x="759" y="200.9" width="17.5" height="1.8" fill="#2222dd"/><rect x="759" y="207.9" width="17.5" height="1.8" fill="#8833aa"/><rect x="755" y="233" width="18" height="17" fill="#eeeeee" opacity="0.6"/><rect x="756.5" y="234.3" width="9" height="4.5" fill="#e8e8e8"/><path d="M765.3,234 H773 V241.3 Z" fill="#ff7a1a"/><text x="756.5" y="248.3" font-size="10" font-weight="bold" fill="#000" letter-spacing="-1.6" font-family="Liberation Sans">TXT</text><rect x="679" y="210" width="24" height="22" fill="#eeeeee" opacity="0.5"/><rect x="682" y="213.2" width="18" height="2" fill="#000"/><rect x="682" y="227.8" width="18" height="2" fill="#000"/><text x="681.9" y="226.1" font-size="12.7" fill="#111" letter-spacing="0.6" font-family="Liberation Sans">AT</text><path d="M577.9,205.5 h9.2 M582.5,200.9 v9.2" stroke="#e8781e" stroke-width="2.4"/><path d="M577.9,236.5 h9.2 M582.5,231.9 v9.2" stroke="#e8781e" stroke-width="2.4"/><path d="M628.9,205.3 h9.2" stroke="#e8781e" stroke-width="2.4"/><path d="M628.9,236.3 h9.2" stroke="#e8781e" stroke-width="2.4"/><path d="M1297,200.4 h7 l-3.5,4.6 z" fill="#5a5a5a"/><path d="M1297,239.4 h7 l-3.5,4.6 z" fill="#5a5a5a"/></svg>
<div class="a" style="left:25px;top:280px;width:1846px;height:604px;border:1px solid #bcbcbc;border-radius:3px"></div>
<div class="a" style="left:1877px;top:280px;width:17px;height:604px;background:#efefef"></div>
<div class="a" style="left:1877px;top:280px;width:17px;height:17px;background:#e3e3e3;border-right:1px solid #bdbdbd;border-bottom:1px solid #bdbdbd;border-radius:0 2px 0 0"></div>
<div class="a" style="left:1877px;top:867px;width:17px;height:17px;background:#e3e3e3;border-top:1px solid #bdbdbd;border-right:1px solid #bdbdbd;border-bottom:1px solid #bdbdbd;border-radius:0 0 2px 0"></div>
<svg class="a" style="left:1877px;top:280px" width="17" height="604"><path d="M4.9,11.2 h7 l-3.5,-4 z" fill="#c4c4c4"/><path d="M5,593.3 h7 l-3.5,4.2 z" fill="#c4c4c4"/></svg>
<div class="a" style="left:25px;top:890px;width:1846px;height:134px;border:1px solid #bcbcbc;border-radius:3px"></div>
<div class="a" style="left:26px;top:1030px;width:1845px;height:17px;background:#efefef"></div>
<div class="a" style="left:26px;top:1030px;width:17px;height:17px;background:#e3e3e3;border-right:1px solid #bdbdbd;border-bottom:1px solid #bdbdbd;border-radius:2px 0 0 2px"></div>
<div class="a" style="left:44px;top:1030px;width:2px;height:17px;background:#c4c4c4"></div>
<div class="a" style="left:1854px;top:1030px;width:17px;height:17px;background:#e3e3e3;border-right:1px solid #bdbdbd;border-bottom:1px solid #bdbdbd;border-radius:0 2px 2px 0"></div>
<svg class="a" style="left:26px;top:1030px" width="1845" height="17"><path d="M4.7,8.4 l5,-3.5 v7 z" fill="#777"/><path d="M1834.2,4.9 v7 l5,-3.5 z" fill="#777"/></svg>
<svg class="a" style="left:0;top:0" width="1920" height="1073"><defs><linearGradient id="og" x1="0" x2="1" y1="0" y2="0"><stop offset="0" stop-color="#d56a00"/><stop offset="1" stop-color="#ff8000"/></linearGradient><linearGradient id="gg" x1="0" x2="1" y1="0" y2="0"><stop offset="0" stop-color="#a8262c"/><stop offset="1" stop-color="#e83434"/></linearGradient><clipPath id="cp"><rect x="26" y="281" width="1843" height="602"/></clipPath></defs><rect x="27" y="279.5" width="22" height="2" fill="#111"/><polygon points="82.0,453.0 83.0,448.0 85.7,447.6 88.3,447.6 88.3,448.0 88.8,453.0 104.0,453.0 105.0,434.0 107.4,434.3 109.9,434.3 109.9,435.5 112.3,435.5 112.3,435.0 113.3,433.0 115.7,432.5 118.0,432.5 118.0,432.8 120.3,432.8 120.3,431.5 122.7,431.5 122.7,431.0 124.8,429.0 125.4,420.8 128.2,418.2 131.0,418.2 131.0,415.6 134.0,408.0 137.3,401.0 139.9,397.8 142.5,397.8 142.5,395.4 144.6,395.2 146.7,395.2 146.7,395.4 148.8,395.4 148.8,394.4 150.9,394.4 150.9,395.0 153.0,395.0 153.0,394.4 155.1,395.0 157.1,395.0 157.1,394.4 159.2,394.4 159.2,394.2 161.3,394.2 161.3,394.4 163.4,394.4 163.4,395.4 165.4,395.4 165.4,396.0 167.5,396.0 167.5,395.8 169.6,396.1 171.7,396.1 171.7,395.5 173.8,395.5 173.8,396.2 175.8,396.2 175.8,396.5 177.9,396.5 177.9,396.7 180.0,396.7 180.0,398.2 182.1,398.2 182.1,396.9 184.2,396.9 184.2,397.9 186.2,397.9 186.2,399.0 188.3,399.0 188.3,398.5 190.4,398.5 190.4,399.1 192.5,399.1 192.5,399.0 193.5,412.5 195.6,416.6 197.7,416.6 197.7,420.8 200.1,422.4 202.6,422.4 202.6,425.6 205.0,425.6 205.0,428.0 207.0,429.4 209.0,429.4 209.0,430.0 211.2,426.5 213.3,426.5 213.3,423.0 215.9,422.7 218.5,422.7 218.5,420.8 221.2,412.0 223.4,411.1 225.6,411.1 225.6,412.6 227.8,412.6 227.8,411.6 230.0,411.6 230.0,411.5 232.5,408.3 235.0,408.3 235.0,406.7 237.4,406.6 239.8,406.6 239.8,408.2 242.2,408.2 242.2,406.9 244.6,406.9 244.6,408.0 247.0,407.7 249.5,407.7 249.5,408.1 251.9,408.1 251.9,409.4 253.9,410.3 256.0,410.3 256.0,410.7 258.0,410.7 258.0,412.0 261.2,404.0 263.9,399.8 266.5,399.8 266.5,394.8 269.1,391.9 271.7,391.9 271.7,387.5 274.0,385.2 276.2,385.2 276.2,382.9 278.5,382.9 278.5,380.6 280.7,380.6 280.7,377.9 283.0,377.9 283.0,376.0 285.0,375.6 287.0,375.6 287.0,376.8 289.0,376.8 289.0,375.2 291.0,375.2 291.0,376.0 293.0,376.0 293.0,375.6 295.0,375.6 295.0,375.2 297.0,375.2 297.0,375.6 299.0,375.6 299.0,375.6 301.0,375.6 301.0,376.8 303.0,376.8 303.0,376.8 305.0,376.8 305.0,376.4 307.0,376.4 307.0,376.8 309.0,376.8 309.0,376.0 311.1,375.3 313.2,375.3 313.2,375.4 315.3,375.4 315.3,376.8 317.4,376.8 317.4,376.5 319.5,376.5 319.5,377.0 321.6,377.0 321.6,376.8 323.7,376.8 323.7,376.5 325.8,376.5 325.8,377.0 327.9,377.9 330.0,377.9 330.0,378.5 332.1,378.5 332.1,380.2 334.1,380.2 334.1,380.7 336.2,380.7 336.2,381.6 338.3,381.6 338.3,382.5 340.4,382.5 340.4,383.5 342.5,383.5 342.5,384.4 344.6,387.4 346.7,387.4 346.7,389.6 347.3,412.5 349.6,412.0 351.9,412.0 351.9,411.5 354.4,414.6 357.0,414.6 357.0,417.7 359.5,414.6 361.9,414.6 361.9,411.4 364.4,411.4 364.4,408.3 366.7,408.5 369.0,408.5 369.0,407.9 371.2,407.9 371.2,408.2 373.5,408.2 373.5,408.8 375.8,408.8 375.8,409.4 377.9,409.7 380.0,409.7 380.0,409.1 382.1,409.1 382.1,407.8 384.1,407.8 384.1,406.5 386.2,406.5 386.2,406.8 388.3,406.8 388.3,406.2 390.4,405.9 392.5,405.9 392.5,407.5 394.6,407.5 394.6,408.0 396.7,408.0 396.7,408.0 398.8,409.1 400.8,409.1 400.8,409.0 402.9,409.0 402.9,408.4 404.9,408.4 404.9,409.5 407.0,409.5 407.0,409.4 409.0,410.8 411.0,410.8 411.0,411.5 413.0,411.5 413.0,412.5 413.3,386.5 415.4,386.9 417.5,386.9 417.5,386.9 419.6,386.9 419.6,385.7 421.7,385.7 421.7,386.5 424.3,380.4 426.9,380.4 426.9,375.0 429.3,375.3 431.6,375.3 431.6,373.6 434.0,373.6 434.0,373.5 436.1,374.4 438.2,374.4 438.2,373.6 440.3,373.6 440.3,373.6 442.4,373.6 442.4,373.7 444.5,373.7 444.5,374.1 446.6,374.1 446.6,373.8 448.7,373.8 448.7,373.5 450.8,373.5 450.8,373.1 452.9,373.1 452.9,373.6 455.0,373.6 455.0,374.0 457.1,374.5 459.2,374.5 459.2,376.3 461.2,376.3 461.2,378.0 463.4,378.8 465.6,378.8 465.6,379.6 467.8,379.6 467.8,380.0 470.0,380.0 470.0,381.2 472.4,382.3 474.7,382.3 474.7,381.0 477.0,381.0 477.0,382.8 479.4,382.8 479.4,382.3 480.4,388.5 482.5,390.5 484.6,390.5 484.6,392.4 486.7,392.4 486.7,392.8 488.8,392.8 488.8,394.8 491.2,395.9 493.6,395.9 493.6,396.5 496.0,396.5 496.0,398.0 498.2,398.8 500.4,398.8 500.4,398.4 502.7,398.4 502.7,397.2 504.9,397.2 504.9,398.0 507.1,398.0 507.1,398.0 509.3,398.0 509.3,398.4 511.5,398.4 511.5,398.0 513.8,398.0 513.8,398.0 515.4,372.5 517.5,373.3 519.7,373.3 519.7,372.1 521.8,372.1 521.8,372.1 524.0,372.1 524.0,372.1 526.1,372.1 526.1,372.9 528.2,372.9 528.2,371.7 530.4,371.7 530.4,372.5 532.5,372.5 532.5,372.5 534.6,371.7 536.6,371.7 536.6,371.8 538.7,371.8 538.7,370.2 540.8,370.2 540.8,369.4 542.9,368.7 545.0,368.7 545.0,369.6 547.1,369.6 547.1,368.9 549.1,368.9 549.1,369.8 551.2,369.8 551.2,370.7 553.3,370.7 553.3,369.9 555.4,369.9 555.4,369.2 557.5,369.2 557.5,370.1 559.6,370.1 559.6,369.8 561.7,369.8 561.7,369.9 563.8,369.9 563.8,370.4 565.8,372.0 567.9,372.0 567.9,372.9 569.9,372.9 569.9,375.4 572.0,375.4 572.0,377.0 574.1,378.2 576.2,378.2 576.2,377.5 578.3,377.5 578.3,377.9 580.4,377.9 580.4,379.5 582.5,379.5 582.5,379.9 584.6,379.9 584.6,379.6 586.7,379.6 586.7,380.0 588.8,387.5 590.8,387.1 592.9,387.1 592.9,388.4 595.0,388.4 595.0,388.4 597.1,388.4 597.1,390.1 599.1,390.1 599.1,390.1 601.2,390.1 601.2,391.0 603.3,391.0 603.3,390.6 605.4,391.6 607.5,391.6 607.5,391.9 609.6,391.9 609.6,393.3 611.7,393.3 611.7,394.8 613.8,394.8 613.8,395.8 615.9,401.7 618.0,401.7 618.0,408.3 620.1,409.0 622.1,409.0 622.1,410.1 624.2,410.1 624.2,410.4 626.3,410.4 626.3,411.1 628.3,411.1 628.3,412.2 630.4,412.2 630.4,412.5 632.5,412.6 634.6,412.6 634.6,412.8 636.7,412.8 636.7,412.5 638.7,412.5 638.7,413.5 640.8,413.5 640.8,413.6 642.9,413.6 642.9,413.4 645.0,413.4 645.0,413.5 647.6,417.6 650.2,417.6 650.2,422.5 652.5,423.2 654.8,423.2 654.8,421.5 657.1,421.5 657.1,422.1 659.4,422.1 659.4,422.8 661.7,422.8 661.7,421.9 663.8,421.4 665.9,421.4 665.9,422.5 667.9,422.5 667.9,420.8 670.0,420.8 670.0,421.5 672.1,421.5 672.1,421.8 674.2,421.8 674.2,421.2 676.3,421.2 676.3,421.9 678.3,421.9 678.3,420.6 680.4,420.6 680.4,421.3 682.5,421.3 682.5,420.8 684.8,422.7 687.1,422.7 687.1,424.6 689.4,424.6 689.4,427.2 691.7,427.2 691.7,428.3 694.0,428.3 694.0,430.2 696.1,428.7 698.1,428.7 698.1,427.7 700.2,427.7 700.2,427.0 701.2,421.2 703.3,420.9 705.4,420.9 705.4,420.4 707.5,420.4 707.5,421.2 709.6,413.8 711.7,413.8 711.7,406.2 713.8,404.4 715.9,404.4 715.9,403.8 717.9,403.8 717.9,402.3 720.0,402.3 720.0,402.9 722.1,402.9 722.1,401.1 724.2,401.1 724.2,399.6 726.2,399.6 726.2,399.0 728.3,397.9 730.4,397.9 730.4,397.6 732.5,397.6 732.5,398.9 734.6,398.9 734.6,397.8 736.6,397.8 736.6,397.1 738.7,397.1 738.7,397.2 740.8,397.2 740.8,396.9 742.9,397.7 745.0,397.7 745.0,397.7 747.1,397.7 747.1,398.1 749.2,398.1 749.2,398.5 751.2,398.5 751.2,398.6 753.3,398.6 753.3,399.8 755.4,399.8 755.4,399.4 757.5,399.4 757.5,399.8 759.6,399.8 759.6,400.2 761.7,400.2 761.7,401.0 763.8,404.6 765.8,404.6 765.8,408.3 767.9,409.0 770.0,409.0 770.0,411.2 772.1,411.2 772.1,412.2 774.1,412.2 774.1,412.9 776.2,412.9 776.2,412.8 778.3,412.8 778.3,415.0 780.4,415.0 780.4,416.4 782.5,416.4 782.5,416.7 784.9,418.4 787.2,418.4 787.2,420.1 789.5,420.1 789.5,419.8 791.9,419.8 791.9,421.9 795.0,416.7 797.1,414.4 799.2,414.4 799.2,413.8 801.2,413.8 801.2,412.3 803.3,412.3 803.3,410.1 805.4,410.1 805.4,409.4 807.5,408.6 809.5,408.6 809.5,408.2 811.6,408.2 811.6,406.6 813.7,406.6 813.7,407.0 815.8,407.0 815.8,405.0 817.9,405.0 817.9,404.6 819.9,404.6 819.9,404.6 822.0,404.6 822.0,403.0 824.1,403.2 826.2,403.2 826.2,402.6 828.3,402.6 828.3,403.2 830.4,403.2 830.4,401.5 832.5,401.5 832.5,401.7 834.6,401.7 834.6,401.9 836.7,401.9 836.7,401.7 838.8,402.0 840.9,402.0 840.9,403.1 842.9,403.1 842.9,404.6 845.0,404.6 845.0,404.5 847.1,404.5 847.1,405.6 849.1,405.6 849.1,406.3 851.2,406.3 851.2,406.6 853.3,406.6 853.3,407.3 855.7,410.7 858.2,410.7 858.2,412.5 860.6,412.5 860.6,416.2 862.7,399.0 865.1,399.0 867.5,399.0 867.5,398.6 869.8,398.6 869.8,396.9 872.2,396.9 872.2,397.7 874.6,397.7 874.6,396.9 876.7,397.3 878.8,397.3 878.8,397.8 880.8,397.8 880.8,397.1 882.9,397.1 882.9,397.5 885.0,397.5 885.0,397.1 887.1,397.1 887.1,397.2 889.2,397.2 889.2,398.1 891.2,398.1 891.2,397.3 893.3,397.9 895.4,397.9 895.4,398.1 897.5,398.1 897.5,398.3 899.6,398.3 899.6,397.7 901.7,397.7 901.7,397.5 903.7,397.5 903.7,398.9 905.8,398.9 905.8,398.8 907.9,398.8 907.9,398.6 910.0,398.6 910.0,399.2 912.1,399.2 912.1,398.6 914.1,398.6 914.1,399.6 916.2,399.6 916.2,400.6 918.3,400.6 918.3,400.0 920.4,400.5 922.5,400.5 922.5,400.3 924.6,400.3 924.6,400.8 926.7,400.8 926.7,402.9 928.8,402.9 928.8,401.9 930.9,401.9 930.9,404.0 933.0,404.0 933.0,403.8 936.0,414.6 938.0,428.0 940.5,432.2 942.9,432.2 942.9,436.8 945.4,436.8 945.4,440.6 948.0,440.6 948.5,424.0 950.6,422.8 952.7,422.8 952.7,420.8 955.0,419.5 957.2,419.5 957.2,420.6 959.5,420.6 959.5,420.1 961.7,420.1 961.7,419.5 964.0,419.5 964.0,418.2 966.2,418.2 966.2,417.7 968.3,417.8 970.4,417.8 970.4,418.3 972.5,418.3 972.5,418.4 974.6,418.4 974.6,418.2 976.7,418.2 976.7,418.3 978.8,418.3 978.8,417.6 980.8,417.6 980.8,418.1 982.9,418.1 982.9,417.8 985.0,417.8 985.0,418.8 987.1,417.4 989.2,417.4 989.2,418.4 991.2,418.4 991.2,417.0 993.3,418.1 995.4,418.1 995.4,418.3 997.5,418.3 997.5,419.8 999.6,419.8 999.6,421.2 1001.7,421.2 1001.7,423.1 1003.8,423.1 1003.8,423.3 1006.4,423.7 1009.0,423.7 1009.0,423.3 1011.0,414.6 1013.1,414.1 1015.2,414.1 1015.2,413.5 1016.2,401.0 1018.3,401.5 1020.4,401.5 1020.4,400.4 1022.5,400.4 1022.5,400.0 1024.6,400.0 1024.6,399.3 1026.7,399.3 1026.7,399.4 1028.8,399.4 1028.8,399.1 1030.9,399.1 1030.9,398.8 1032.9,398.8 1032.9,398.5 1035.0,398.5 1035.0,397.7 1037.1,397.7 1037.1,398.6 1039.2,398.6 1039.2,397.5 1041.3,398.5 1043.4,398.5 1043.4,397.0 1045.4,397.0 1045.4,397.2 1047.5,397.2 1047.5,398.1 1049.6,398.1 1049.6,398.3 1050.6,408.8 1053.2,407.6 1055.8,407.6 1055.8,407.3 1057.9,404.5 1060.0,404.5 1060.0,401.7 1062.1,401.4 1064.2,401.4 1064.2,401.8 1066.2,401.8 1066.2,401.1 1068.3,401.1 1068.3,399.9 1070.4,399.9 1070.4,400.0 1071.5,396.2 1073.7,396.4 1075.8,396.4 1075.8,397.3 1078.0,397.3 1078.0,397.4 1080.2,397.4 1080.2,397.1 1082.4,397.1 1082.4,397.6 1084.5,397.6 1084.5,397.7 1086.7,397.7 1086.7,397.4 1088.9,397.4 1088.9,398.0 1091.1,398.0 1091.1,398.1 1093.2,398.1 1093.2,397.4 1095.4,397.4 1095.4,397.5 1097.5,397.4 1099.6,397.4 1099.6,398.0 1101.6,398.0 1101.6,398.3 1103.7,398.3 1103.7,398.6 1105.8,398.6 1105.8,398.8 1107.9,398.8 1107.9,399.5 1110.0,399.5 1110.0,399.3 1112.1,399.3 1112.1,400.0 1114.1,400.0 1114.1,400.7 1116.2,400.7 1116.2,399.3 1118.3,399.3 1118.3,400.4 1120.4,412.5 1122.5,412.9 1124.6,412.9 1124.6,414.1 1126.6,414.1 1126.6,414.4 1128.7,414.4 1128.7,415.6 1130.8,415.6 1130.8,416.4 1132.8,416.4 1132.8,418.0 1134.9,418.0 1134.9,417.6 1137.0,417.6 1137.0,418.8 1139.1,421.4 1141.2,421.4 1141.2,426.1 1143.3,426.1 1143.3,429.2 1145.4,430.5 1147.5,430.5 1147.5,431.9 1149.6,431.9 1149.6,434.4 1151.7,437.6 1153.8,437.6 1153.8,440.0 1153.8,453.0 1171.5,453.0 1172.5,451.5 1175.6,451.5 1176.0,453.0 1224.6,453.0 1225.6,451.5 1228.1,451.5 1230.5,451.5 1230.5,451.9 1233.0,451.9 1233.0,451.5 1234.0,447.3 1237.0,447.3 1238.0,453.0 1252.0,453.0 1253.0,445.4 1255.7,443.5 1258.3,443.5 1258.3,441.7 1260.4,442.5 1262.5,442.5 1262.5,442.5 1264.6,442.5 1264.6,441.7 1266.7,441.7 1266.7,440.9 1268.8,440.9 1268.8,441.3 1270.8,441.3 1270.8,442.5 1272.9,442.5 1272.9,441.7 1275.0,441.7 1275.0,441.3 1277.1,441.3 1277.1,442.5 1279.2,442.5 1279.2,441.7 1279.2,437.0 1281.4,437.0 1283.6,437.0 1283.6,437.0 1285.8,437.0 1285.8,437.8 1288.0,437.8 1288.0,437.0 1289.0,435.0 1291.2,435.5 1293.4,435.5 1293.4,436.0 1295.6,436.0 1295.6,434.8 1297.8,434.8 1297.8,435.3 1300.0,435.3 1300.0,435.4 1303.0,438.5 1305.4,438.2 1307.8,438.2 1307.8,438.8 1310.1,438.8 1310.1,440.1 1312.5,440.1 1312.5,440.6 1314.6,448.0 1316.7,450.2 1318.8,450.2 1318.8,451.7 1320.8,451.7 1322.9,451.7 1322.9,451.3 1325.0,451.3 1325.0,451.7 1325.0,453.0 1341.7,453.0 1342.7,451.0 1345.0,451.8 1347.2,451.8 1347.2,451.4 1349.5,451.4 1349.5,450.6 1351.7,450.6 1351.7,450.6 1354.0,450.6 1354.0,451.0 1354.0,446.9 1356.1,447.3 1358.2,447.3 1358.2,447.7 1360.3,447.7 1360.3,446.9 1362.4,446.9 1362.4,447.7 1364.5,447.7 1364.5,446.9 1366.6,446.9 1366.6,446.5 1368.7,446.5 1368.7,446.9 1370.7,446.9 1370.7,446.9 1372.8,446.9 1372.8,446.9 1374.9,446.9 1374.9,446.9 1377.0,446.9 1377.0,446.9 1379.1,446.9 1379.1,447.3 1381.2,447.3 1381.2,447.7 1383.3,447.7 1383.3,446.9 1385.9,445.3 1388.5,445.3 1388.5,443.8 1391.7,447.5 1393.8,449.1 1395.8,449.1 1395.8,449.0 1398.0,452.0 1401.0,453.0 1416.0,453.0 1417.0,451.0 1419.5,450.6 1421.9,450.6 1421.9,451.0 1421.9,448.3 1424.0,449.1 1426.0,449.1 1426.0,448.3 1426.0,453.0 1437.5,453.0 1437.5,448.3 1440.1,446.6 1442.7,446.6 1442.7,444.8 1444.8,453.0 1470.8,453.0 1470.8,451.0 1472.9,451.4 1475.0,451.4 1475.0,451.0 1477.1,451.0 1477.1,450.2 1479.2,450.2 1479.2,450.6 1481.2,450.6 1481.2,451.0 1481.2,453.0 1594.8,453.0 1595.4,437.5 1597.7,435.0 1600.0,435.0 1600.0,433.3 1602.1,432.5 1604.2,432.5 1604.2,433.2 1606.2,433.2 1606.2,434.0 1608.3,434.0 1608.3,434.0 1610.4,434.0 1610.4,433.2 1612.5,433.2 1612.5,432.3 1614.6,432.3 1614.6,432.3 1616.7,432.3 1616.7,433.5 1618.8,433.5 1618.8,433.5 1620.8,433.5 1620.8,432.2 1622.9,432.2 1622.9,433.0 1625.0,433.0 1625.0,433.0 1627.0,433.5 1629.0,433.5 1629.0,433.2 1631.0,433.2 1631.0,433.3 1633.1,434.9 1635.3,434.9 1635.3,435.0 1637.4,435.0 1637.4,435.4 1639.6,435.4 1639.6,435.9 1641.7,435.9 1641.7,437.5 1642.0,440.0 1643.0,443.8 1645.5,444.1 1648.1,444.1 1648.1,443.4 1650.6,443.4 1650.6,443.8 1651.2,447.2 1653.6,446.4 1655.9,446.4 1655.9,447.2 1658.3,447.2 1658.3,446.9 1660.6,446.9 1660.6,447.2 1661.2,451.9 1667.0,452.5 1668.0,453.0 1725.0,453.0 1726.9,403.0 1730.0,402.2 1732.1,402.3 1734.2,402.3 1734.2,402.3 1736.2,402.3 1736.2,401.6 1738.3,401.6 1738.3,402.4 1740.4,402.4 1740.4,402.0 1742.5,402.0 1742.5,402.1 1744.6,402.1 1744.6,402.9 1746.7,402.9 1746.7,402.5 1748.8,402.5 1748.8,402.9 1750.8,402.9 1750.8,401.8 1752.9,401.8 1752.9,402.6 1755.0,402.6 1755.0,402.2 1757.1,402.2 1757.1,402.7 1759.2,402.7 1759.2,402.7 1761.2,402.7 1761.2,402.8 1763.8,400.3 1766.2,400.3 1766.2,397.0 1768.3,395.7 1770.4,395.7 1770.4,394.9 1772.5,394.9 1772.5,394.4 1774.5,394.4 1776.5,394.4 1776.5,394.0 1778.5,394.0 1778.5,393.3 1780.5,393.3 1780.5,392.1 1782.5,392.1 1782.5,392.5 1783.8,388.8 1787.5,386.0 1789.6,386.9 1791.7,386.9 1791.7,386.7 1793.8,386.7 1793.8,385.6 1795.8,385.6 1795.8,385.8 1797.9,385.8 1797.9,386.8 1800.0,386.8 1800.0,386.9 1802.1,388.1 1804.3,388.1 1804.3,388.4 1806.4,388.4 1806.4,387.6 1808.6,387.6 1808.6,387.9 1810.7,387.9 1810.7,387.9 1812.9,387.9 1812.9,389.0 1815.0,389.0 1815.0,389.4 1816.2,411.9 1818.8,422.5 1822.5,426.9 1824.6,428.5 1826.7,428.5 1826.7,429.8 1828.8,429.8 1828.8,430.6 1829.4,447.5 1831.2,451.9 1834.4,451.9 1835.0,447.5 1837.2,447.6 1839.4,447.6 1839.4,446.9 1840.6,404.4 1843.0,404.8 1845.4,404.8 1845.4,404.4 1847.7,404.4 1847.7,404.4 1850.1,404.4 1850.1,405.2 1852.5,405.2 1852.5,404.4 1853.8,393.8 1856.2,393.6 1858.8,393.6 1858.8,391.9 1861.2,387.5 1863.8,387.3 1866.2,387.3 1866.2,386.7 1868.8,386.7 1868.8,386.9 1868.8,453.0" fill="#ff6666"/><rect x="26" y="452.5" width="1842.5" height="1.4" fill="#7a7a7a"/><rect x="27" y="300.2" width="3" height="1.6" fill="#222"/><text x="32.50" y="304.85" font-size="10" letter-spacing="0.308" fill="#2c2c2c" >16384.0</text><rect x="27" y="322.2" width="3" height="1.6" fill="#222"/><text x="32.50" y="326.85" font-size="10" letter-spacing="0.282" fill="#2c2c2c" >4096.0</text><rect x="27" y="344.0" width="3" height="1.6" fill="#222"/><text x="32.50" y="348.60" font-size="10" letter-spacing="0.282" fill="#2c2c2c" >1024.0</text><rect x="27" y="365.2" width="3" height="1.6" fill="#222"/><text x="32.50" y="369.85" font-size="10" letter-spacing="0.195" fill="#2c2c2c" >256.0</text><rect x="27" y="387.0" width="3" height="1.6" fill="#222"/><text x="32.50" y="391.60" font-size="10" letter-spacing="0.180" fill="#2c2c2c" >64.0</text><rect x="27" y="409.0" width="3" height="1.6" fill="#222"/><text x="32.50" y="413.60" font-size="10" letter-spacing="0.180" fill="#2c2c2c" >16.0</text><rect x="27" y="431.0" width="3" height="1.6" fill="#222"/><text x="32.50" y="435.60" font-size="10" letter-spacing="0.050" fill="#2c2c2c" >4.0</text><rect x="26" y="451.8" width="4" height="1.6" fill="#222"/><text x="32.50" y="457.60" font-size="10" letter-spacing="0.050" fill="#1a1a1a" >1.0</text><rect x="30" y="453.9" width="30" height="3.6" fill="#fff"/><text x="30.00" y="294.00" font-size="11" letter-spacing="0.049" fill="#0a0a0a" stroke="#0a0a0a" stroke-width="0.3">BHI_2014_EGDe [RNASeq]</text><polygon points="34.1,597.0 34.1,639.5 53.0,640.2 69.7,639.0 75.3,637.0 82.3,628.0 85.0,597.0 88.6,556.3 94.9,536.8 100.5,548.0 108.2,559.0 116.6,539.6 122.8,544.5 129.1,551.5 134.7,538.9 142.4,548.0 146.6,543.0 157.8,564.7 165.5,534.7 171.8,546.6 177.4,553.5 183.0,557.0 190.0,556.0 198.3,561.2 202.5,568.2 209.5,566.8 220.7,562.6 233.3,568.9 240.3,559.8 245.9,572.4 254.2,562.6 260.0,563.8 265.0,562.5 271.9,568.8 278.8,557.5 284.4,568.8 286.9,570.6 297.5,571.0 303.0,564.0 310.6,568.8 316.2,560.6 322.5,565.0 329.4,563.8 338.8,558.5 345.6,563.5 352.5,551.0 366.2,568.8 373.8,551.9 378.8,542.5 384.4,560.0 390.0,554.4 395.6,561.2 403.1,539.4 410.0,553.1 415.0,553.1 421.9,562.5 427.5,568.1 437.5,557.5 445.0,553.1 452.5,556.0 458.8,556.0 466.2,554.0 471.2,555.6 476.2,562.5 482.5,556.9 488.1,569.4 496.2,569.4 502.5,555.6 508.1,539.4 513.8,555.6 520.0,552.5 527.5,547.2 535.0,546.2 541.2,548.1 546.2,551.5 555.6,547.2 564.4,555.0 569.4,551.6 581.2,555.6 588.8,562.5 595.0,552.8 601.2,548.5 605.6,533.8 611.9,552.5 618.8,550.6 625.0,555.0 630.0,559.4 644.4,545.0 651.2,549.4 656.2,540.0 663.1,558.1 669.4,548.1 682.5,558.8 688.8,547.9 698.8,580.0 705.0,536.9 712.5,564.4 718.8,555.0 725.0,557.2 730.0,555.0 738.1,559.4 743.8,565.6 748.8,536.9 755.6,554.4 760.6,547.5 766.9,559.4 772.5,557.2 780.0,561.9 790.6,531.9 795.6,555.0 803.8,562.5 808.1,556.2 822.5,551.9 839.4,554.4 846.9,563.8 853.8,555.0 860.0,556.2 864.4,559.4 870.0,559.4 876.2,547.9 883.1,561.9 893.8,557.2 900.6,559.4 906.9,550.0 913.1,562.5 920.0,565.0 926.2,563.8 932.5,549.8 938.8,558.1 946.1,548.0 953.1,544.2 960.0,563.4 966.1,548.0 967.7,568.8 969.2,597.0 972.3,684.1 976.1,597.0 979.2,568.8 980.3,549.6 986.9,548.8 993.0,551.1 1000.0,558.8 1005.3,555.8 1010.7,545.8 1018.4,558.8 1024.6,556.5 1030.7,559.6 1036.1,568.0 1043.0,552.7 1047.6,543.5 1052.2,559.6 1058.1,551.1 1064.5,562.7 1070.7,561.6 1075.3,567.3 1084.5,545.8 1091.4,558.0 1096.8,551.9 1103.0,558.0 1110.0,546.5 1116.0,550.4 1123.0,551.9 1129.9,547.3 1135.3,547.3 1141.4,574.2 1146.8,571.1 1151.4,575.8 1158.3,597.0 1160.6,600.3 1164.5,593.4 1170.0,592.4 1173.9,597.0 1183.0,597.0 1187.6,585.2 1194.7,597.0 1201.2,588.5 1203.9,597.0 1208.4,612.6 1213.0,600.8 1226.0,599.5 1234.5,611.9 1237.7,608.0 1243.6,618.4 1248.1,604.7 1250.0,597.0 1251.8,591.7 1254.0,597.0 1259.8,609.3 1283.3,609.3 1295.0,604.0 1300.2,608.0 1308.7,615.2 1313.2,608.6 1319.0,613.2 1325.0,597.0 1326.2,593.0 1328.0,597.0 1332.0,610.6 1345.0,609.0 1356.0,597.0 1358.2,585.2 1361.0,597.0 1364.0,608.6 1369.9,639.2 1379.6,608.6 1385.5,599.5 1391.4,606.0 1398.5,602.8 1403.0,616.5 1408.3,609.3 1412.0,597.0 1413.9,594.3 1421.7,593.7 1424.3,597.0 1438.0,615.2 1449.0,609.3 1459.5,609.3 1466.0,608.0 1494.6,608.0 1503.1,623.6 1509.0,608.0 1540.0,606.0 1563.6,597.0 1568.2,593.7 1572.1,597.0 1594.9,609.3 1615.7,609.3 1625.5,621.7 1630.0,608.0 1636.6,610.0 1646.0,597.0 1648.3,593.0 1650.0,597.0 1654.8,609.3 1660.0,606.0 1672.8,609.8 1684.6,607.8 1689.1,597.0 1692.4,585.7 1695.7,594.0 1699.0,600.0 1703.5,604.0 1707.4,605.9 1713.9,688.0 1720.4,616.3 1725.7,597.0 1733.5,566.7 1741.3,574.6 1746.5,579.1 1751.8,575.2 1755.7,579.8 1763.5,592.2 1768.0,579.8 1772.0,570.0 1781.8,579.8 1788.3,581.7 1793.5,579.8 1800.7,587.0 1806.6,575.2 1811.8,576.5 1819.6,571.3 1825.5,568.0 1828.7,575.9 1832.6,581.7 1839.2,573.9 1851.6,571.3 1856.1,575.2 1860.0,577.8 1866.6,575.2 1868.5,575.9 1868.5,597.0" fill="rgb(255,0,0)" fill-opacity="0.6"/><polygon points="34.1,597.0 34.1,655.6 36.2,650.0 39.0,641.6 47.4,648.6 53.0,640.2 62.0,644.4 69.7,639.5 75.3,641.6 82.3,620.6 88.6,639.5 94.9,605.3 108.2,638.8 115.9,602.5 122.8,597.0 129.1,600.4 130.5,597.0 135.4,574.5 142.4,563.3 147.3,562.0 153.6,575.9 157.8,578.7 165.5,580.1 172.5,561.2 183.0,578.7 190.6,571.0 198.3,585.0 202.5,580.1 209.5,578.0 215.1,587.1 220.7,582.2 226.3,581.5 234.0,586.4 240.3,577.3 247.3,585.0 254.2,585.4 259.1,579.4 265.6,585.6 271.9,581.2 278.8,585.6 285.0,586.9 293.8,596.2 298.0,598.0 303.0,587.5 310.6,596.9 316.2,586.2 322.5,593.8 333.0,575.0 340.0,575.6 346.2,574.8 359.4,576.9 366.9,573.1 378.8,557.5 383.8,570.6 390.0,570.0 395.6,573.1 403.1,563.8 409.4,565.0 415.0,571.9 421.9,570.6 427.5,581.2 435.0,579.4 445.0,569.4 458.8,575.6 470.0,568.1 476.2,569.4 482.5,560.6 488.1,569.4 491.2,571.2 496.2,571.0 500.0,566.9 507.5,559.4 514.4,578.1 520.0,572.0 527.5,571.2 535.0,554.4 541.9,572.5 546.2,566.2 550.6,565.0 556.2,574.4 565.0,565.6 570.0,564.8 582.5,567.5 593.8,571.2 600.6,561.9 605.6,563.8 612.5,560.6 619.4,563.8 625.6,560.6 630.0,565.0 638.1,569.4 643.8,566.2 650.6,565.0 656.2,548.8 663.1,575.6 675.0,561.2 682.5,565.0 689.4,555.0 698.8,585.0 705.0,555.0 713.8,566.2 726.2,573.8 730.0,570.6 738.8,579.4 743.8,569.4 755.6,573.8 760.6,572.5 767.5,576.9 773.1,581.9 779.4,568.8 783.8,571.2 790.6,565.6 795.6,571.2 803.8,572.5 807.5,568.1 822.5,572.5 826.9,560.6 833.1,576.2 840.0,571.2 846.9,572.5 853.1,560.6 858.8,568.1 864.4,570.6 870.0,595.0 875.6,575.0 883.1,574.8 889.4,571.9 895.0,581.9 900.6,566.2 906.9,577.5 913.8,579.0 919.4,575.0 926.2,576.9 932.5,571.2 938.1,571.2 946.1,575.8 953.1,578.8 961.5,570.4 971.5,566.2 976.9,597.0 979.7,620.3 983.0,597.0 987.7,568.8 993.8,569.6 1004.6,573.4 1010.7,564.2 1018.4,578.8 1024.6,583.4 1030.0,571.9 1032.2,597.0 1036.1,651.8 1040.0,597.0 1042.2,576.5 1047.6,568.8 1052.2,573.4 1057.6,574.2 1064.5,583.4 1070.7,584.6 1075.3,568.8 1083.0,567.3 1091.4,575.8 1096.8,572.7 1102.2,573.9 1110.7,569.6 1116.0,569.6 1123.0,575.0 1128.3,573.9 1134.5,576.5 1137.6,586.5 1139.9,597.0 1146.8,618.8 1151.4,604.2 1159.9,625.0 1170.0,614.5 1175.9,620.4 1182.4,615.2 1187.6,632.7 1196.0,632.7 1201.9,612.6 1209.0,622.3 1226.6,617.8 1239.0,638.6 1244.2,624.9 1251.4,626.9 1259.8,626.2 1265.0,628.2 1270.9,633.4 1277.4,636.6 1283.9,620.4 1288.5,611.9 1295.0,615.8 1300.9,608.6 1308.7,636.6 1319.7,625.6 1326.2,604.0 1331.5,608.6 1339.3,628.2 1344.5,626.2 1350.3,626.9 1358.2,611.2 1369.9,639.9 1382.2,614.5 1386.8,620.4 1392.0,613.2 1402.4,628.8 1409.6,610.6 1414.8,611.0 1421.0,613.2 1425.0,624.3 1430.8,594.3 1438.6,623.6 1445.2,623.0 1453.6,626.9 1459.5,616.5 1465.3,625.6 1471.2,623.6 1477.0,611.9 1483.6,618.4 1491.4,613.6 1496.6,629.5 1503.0,612.0 1516.8,632.1 1522.0,627.5 1529.8,614.5 1535.7,613.6 1543.5,621.7 1548.0,622.3 1559.1,617.8 1563.6,629.5 1568.2,607.3 1574.0,622.3 1581.9,613.6 1587.1,617.8 1594.9,617.8 1602.0,622.3 1607.9,619.0 1614.4,630.1 1623.5,617.8 1631.4,619.7 1636.6,625.6 1642.4,631.4 1648.3,619.0 1655.2,620.2 1667.0,626.8 1672.8,620.9 1680.7,622.8 1684.6,621.5 1692.4,608.5 1694.4,597.0 1698.9,568.0 1702.8,597.0 1706.0,601.0 1713.9,688.0 1720.4,628.7 1727.0,650.9 1733.5,630.0 1746.5,634.6 1757.6,633.3 1764.2,634.6 1772.0,615.7 1777.2,626.1 1788.9,623.5 1794.8,619.6 1802.0,621.5 1806.6,612.4 1812.4,620.2 1819.6,613.1 1825.5,613.1 1832.0,659.4 1839.2,612.4 1846.3,591.5 1852.2,619.0 1859.4,623.5 1867.2,608.5 1867.6,597.0" fill="rgb(0,0,255)" fill-opacity="0.6"/><rect x="143.1" y="569.6" width="499.4" height="27.4" fill="rgb(126,126,126)" fill-opacity="0.57" stroke="#2e2e2e" stroke-width="1"/><rect x="713.8" y="568.4" width="422.8" height="28.6" fill="rgb(126,126,126)" fill-opacity="0.57" stroke="#2e2e2e" stroke-width="1"/><rect x="1177.3" y="597.0" width="495.1" height="11.3" fill="rgb(126,126,126)" fill-opacity="0.57" stroke="#2e2e2e" stroke-width="1"/><rect x="1738.3" y="579.4" width="81.3" height="17.6" fill="rgb(126,126,126)" fill-opacity="0.57" stroke="#2e2e2e" stroke-width="1"/><rect x="1821.6" y="576.3" width="46.9" height="20.7" fill="rgb(126,126,126)" fill-opacity="0.57" stroke="#2e2e2e" stroke-width="1"/><rect x="30.5" y="478.1" width="13.6" height="9" fill="#fff"/><rect x="27" y="481.6" width="3" height="1.6" fill="#222"/><text x="31.50" y="486.20" font-size="10" letter-spacing="0.000" fill="#2c2c2c" >10</text><rect x="30.5" y="501.1" width="8.1" height="9" fill="#fff"/><rect x="27" y="504.6" width="3" height="1.6" fill="#222"/><text x="31.50" y="509.20" font-size="10" letter-spacing="0.000" fill="#2c2c2c" >8</text><rect x="30.5" y="524.5" width="8.1" height="9" fill="#fff"/><rect x="27" y="528.0" width="3" height="1.6" fill="#222"/><text x="31.50" y="532.60" font-size="10" letter-spacing="0.000" fill="#2c2c2c" >6</text><rect x="30.5" y="547.8" width="8.1" height="9" fill="#fff"/><rect x="27" y="551.3" width="3" height="1.6" fill="#222"/><text x="31.50" y="555.90" font-size="10" letter-spacing="0.000" fill="#2c2c2c" >4</text><rect x="30.5" y="570.8" width="8.1" height="9" fill="#fff"/><rect x="27" y="574.3" width="3" height="1.6" fill="#222"/><text x="31.50" y="578.90" font-size="10" letter-spacing="0.000" fill="#2c2c2c" >2</text><rect x="30.5" y="593.3" width="8.1" height="9" fill="#fff"/><rect x="27" y="596.8" width="3" height="1.6" fill="#222"/><text x="31.50" y="601.40" font-size="10" letter-spacing="0.000" fill="#2c2c2c" >0</text><rect x="30.5" y="616.7" width="11.4" height="9" fill="#fff"/><rect x="27" y="620.2" width="3" height="1.6" fill="#222"/><text x="31.50" y="624.80" font-size="10" letter-spacing="0.000" fill="#2c2c2c" >-2</text><rect x="30.5" y="639.8" width="11.4" height="9" fill="#fff"/><rect x="27" y="643.3" width="3" height="1.6" fill="#222"/><text x="31.50" y="647.90" font-size="10" letter-spacing="0.000" fill="#2c2c2c" >-4</text><rect x="30.5" y="662.8" width="11.4" height="9" fill="#fff"/><rect x="27" y="666.3" width="3" height="1.6" fill="#222"/><text x="31.50" y="670.90" font-size="10" letter-spacing="0.000" fill="#2c2c2c" >-6</text><rect x="30.5" y="685.7" width="11.4" height="9" fill="#fff"/><rect x="27" y="689.2" width="3" height="1.6" fill="#222"/><text x="31.50" y="693.80" font-size="10" letter-spacing="0.000" fill="#2c2c2c" >-8</text><rect x="27" y="711.5" width="3" height="2" fill="#222"/><text x="30.5" y="716.2" font-size="10" fill="#1a1a1a" letter-spacing="0.3">-10</text><rect x="26" y="714.5" width="160" height="14" fill="#fff"/><rect x="27" y="456" width="3" height="1.5" fill="#222"/><text x="30.00" y="465.50" font-size="11" letter-spacing="0.219" fill="#0a0a0a" stroke="#0a0a0a" stroke-width="0.3">EGDe_270407 [GeneExpr, Tiling]</text><rect x="26" y="791.3" width="1842.5" height="1.5" fill="#9a9a9a"/><text x="30.00" y="725.00" font-size="11" letter-spacing="0.140" fill="#0a0a0a" stroke="#0a0a0a" stroke-width="0.3">EGDe_Complete_TSS [TSS]</text><path d="M82.5,792 V734.2 q0,-1.5 2,-1.5 H88.5" fill="none" stroke="#ff0000" stroke-width="3"/><path d="M705.5,792 V775.2 q0,-1.5 2,-1.5 H711" fill="none" stroke="#ff0000" stroke-width="3"/><path d="M1726.5,792 V753.2 q0,-1.5 2,-1.5 H1732" fill="none" stroke="#ff0000" stroke-width="3"/><path d="M1728,792 V776.5 H1734" fill="none" stroke="#ff0000" stroke-width="3.2"/><text x="97.80" y="743.00" font-size="10" letter-spacing="0.122" fill="#ff2a2a" >1783.0</text><text x="719.00" y="783.00" font-size="10" letter-spacing="0.050" fill="#ff2a2a" >9.0</text><text x="1741.00" y="761.00" font-size="10" letter-spacing="-0.030" fill="#ff2a2a" >174.0</text><text x="1742.00" y="784.00" font-size="10" letter-spacing="0.050" fill="#ff2a2a" >8.0</text><rect x="143.0" y="892" width="1" height="131" fill="#f1f1f1"/><rect x="642.0" y="892" width="1" height="131" fill="#f1f1f1"/><rect x="713.25" y="892" width="1" height="131" fill="#f1f1f1"/><rect x="1136.25" y="892" width="1" height="131" fill="#f1f1f1"/><rect x="1176.5" y="892" width="1" height="131" fill="#f1f1f1"/><rect x="1672.0" y="892" width="1" height="131" fill="#f1f1f1"/><rect x="1737.5" y="892" width="1" height="131" fill="#f1f1f1"/><rect x="1819.5" y="892" width="1" height="131" fill="#f1f1f1"/><rect x="26" y="912.5" width="1842.5" height="2" fill="#111"/><rect x="25.75" y="907" width="1.6" height="6" fill="#111"/><text x="32.10" y="903.00" font-size="9.6" letter-spacing="0.556" fill="#383838" >0 bp</text><rect x="192.75" y="907" width="1.6" height="6" fill="#111"/><text x="199.10" y="903.00" font-size="9.6" letter-spacing="0.527" fill="#383838" >454 bp</text><rect x="360.00" y="907" width="1.6" height="6" fill="#111"/><text x="366.35" y="903.00" font-size="9.6" letter-spacing="0.527" fill="#383838" >908 bp</text><rect x="527.25" y="907" width="1.6" height="6" fill="#111"/><text x="533.60" y="903.00" font-size="9.6" letter-spacing="0.499" fill="#383838" >1362 bp</text><rect x="694.25" y="907" width="1.6" height="6" fill="#111"/><text x="700.60" y="903.00" font-size="9.6" letter-spacing="0.499" fill="#383838" >1816 bp</text><rect x="861.75" y="907" width="1.6" height="6" fill="#111"/><text x="868.10" y="903.00" font-size="9.6" letter-spacing="0.499" fill="#383838" >2270 bp</text><rect x="1030.00" y="907" width="1.6" height="6" fill="#111"/><text x="1036.35" y="903.00" font-size="9.6" letter-spacing="0.499" fill="#383838" >2724 bp</text><rect x="1197.25" y="907" width="1.6" height="6" fill="#111"/><text x="1203.60" y="903.00" font-size="9.6" letter-spacing="0.499" fill="#383838" >3178 bp</text><rect x="1364.45" y="907" width="1.6" height="6" fill="#111"/><text x="1370.80" y="903.00" font-size="9.6" letter-spacing="0.499" fill="#383838" >3632 bp</text><rect x="1531.75" y="907" width="1.6" height="6" fill="#111"/><text x="1538.10" y="903.00" font-size="9.6" letter-spacing="0.499" fill="#383838" >4086 bp</text><rect x="1698.75" y="907" width="1.6" height="6" fill="#111"/><text x="1705.10" y="903.00" font-size="9.6" letter-spacing="0.499" fill="#383838" >4540 bp</text><rect x="143" y="915" width="993.75" height="15" fill="url(#og)"/><rect x="143" y="928.8" width="993.75" height="1.2" fill="#b35a00" opacity="0.6"/><rect x="1135.8" y="915" width="1" height="15" fill="#6a3500"/><rect x="143" y="930" width="993.75" height="2" fill="#c8c0b8"/><rect x="143" y="915" width="993.75" height="1" fill="#8a4a10" opacity="0.55"/><rect x="1738" y="915" width="130.75" height="15" fill="url(#og)"/><rect x="1738" y="928.8" width="130.75" height="1.2" fill="#b35a00" opacity="0.6"/><rect x="1738" y="930" width="130.75" height="2" fill="#c8c0b8"/><rect x="1738" y="915" width="130.75" height="1" fill="#8a4a10" opacity="0.55"/><rect x="1737.5" y="915" width="1" height="15" fill="#8a4500" opacity="0.7"/><rect x="30" y="915" width="218" height="12" fill="#fff"/><text x="32.50" y="924.00" font-size="9.6" letter-spacing="0.393" fill="#3a3a3a" >Listeria monocytogenes EGD-e : 2944528 (bp)</text><ellipse cx="660" cy="922.6" rx="4.4" ry="6.8" fill="#8c8cf2" stroke="#a86a6a" stroke-width="1"/><ellipse cx="1146.25" cy="922.6" rx="4.4" ry="6.8" fill="#8c8cf2" stroke="#a86a6a" stroke-width="1"/><ellipse cx="1710.75" cy="922.6" rx="4.4" ry="6.8" fill="#8c8cf2" stroke="#a86a6a" stroke-width="1"/><path d="M143,932 H610 L642.5,960.75 L610,989.5 H143 Z" fill="url(#gg)"/><path d="M610,932.3 L642.5,960.75 L610,989.2" fill="none" stroke="#8a4a4a" stroke-width="1" opacity="0.7"/><path d="M713.75,932 H1103.75 L1136.75,960.75 L1103.75,989.5 H713.75 Z" fill="url(#gg)"/><path d="M1103.75,932.3 L1136.75,960.75 L1103.75,989.2" fill="none" stroke="#8a4a4a" stroke-width="1" opacity="0.7"/><path d="M1177,932 H1640 L1672.5,960.75 L1640,989.5 H1177 Z" fill="url(#gg)"/><path d="M1640,932.3 L1672.5,960.75 L1640,989.2" fill="none" stroke="#8a4a4a" stroke-width="1" opacity="0.7"/><path d="M1737.5,932 H1786.25 L1820,960.75 L1786.25,989.5 H1737.5 Z" fill="url(#gg)"/><path d="M1786.25,932.3 L1820,960.75 L1786.25,989.2" fill="none" stroke="#8a4a4a" stroke-width="1" opacity="0.7"/><rect x="1821.25" y="932" width="47.5" height="57.5" fill="url(#gg)"/><text x="148.00" y="960.70" font-size="9" letter-spacing="-0.255" fill="#fff" font-weight="bold" stroke="#fff" stroke-width="0.35">lmo0001 - dnaA</text><text x="148.00" y="973.90" font-size="9" letter-spacing="-0.337" fill="#fff" font-weight="bold" stroke="#fff" stroke-width="0.35">chromosomal replication initiation protein</text><text x="718.75" y="960.80" font-size="9" letter-spacing="-0.255" fill="#fff" font-weight="bold" stroke="#fff" stroke-width="0.35">lmo0002 - dnaN</text><text x="718.75" y="973.80" font-size="9" letter-spacing="-0.325" fill="#fff" font-weight="bold" stroke="#fff" stroke-width="0.35">DNA polymerase III subunit beta</text><text x="1182.00" y="960.80" font-size="9" letter-spacing="-0.670" fill="#fff" font-weight="bold" stroke="#fff" stroke-width="0.35">lmo0003</text><text x="1182.00" y="973.80" font-size="9" letter-spacing="-0.316" fill="#fff" font-weight="bold" stroke="#fff" stroke-width="0.35">hypothetical protein</text><text x="1742.50" y="961.20" font-size="9" letter-spacing="-0.086" fill="#fff" font-weight="bold" stroke="#fff" stroke-width="0.35">lmo0004</text></svg>
</body></html>
